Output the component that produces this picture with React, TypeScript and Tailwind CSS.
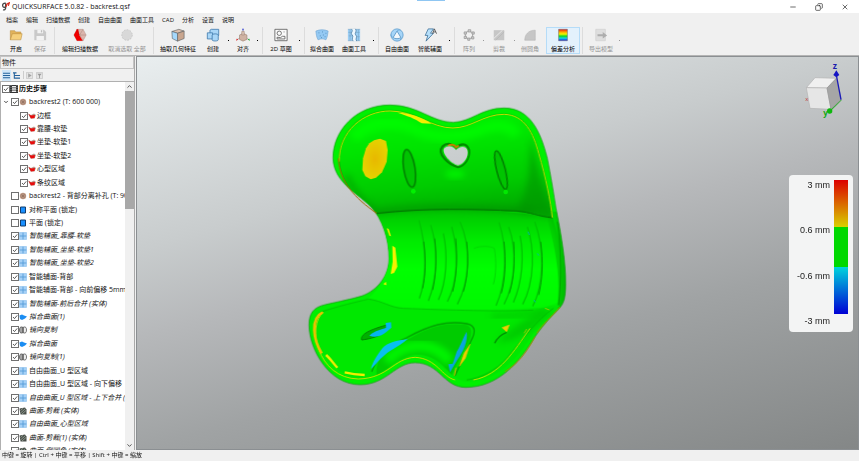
import { useState } from 'react';
import type { ReactNode } from 'react';
import { Minus, Copy, X, ChevronUp, ChevronDown } from 'lucide-react';
import clsx from 'clsx';

const MENUS = ['档案', '编辑', '扫描数据', '创建', '自由曲面', '曲面工具', 'CAD', '分析', '设置', '说明'];

type IconName =
  | 'open' | 'save' | 'scan' | 'deselect' | 'extract' | 'create' | 'align' | 'sketch' | 'fit'
  | 'tools' | 'free' | 'smart' | 'pattern' | 'trim' | 'fillet' | 'deviation' | 'export';

const TOOL_ICONS: Record<IconName, ReactNode> = {
  open: (
    <>
      <path d="M1.5 13.5V3h5l1 1.5h6V7" fill="#e0b25c" stroke="#b98a3a" strokeWidth=".6" />
      <path d="M1.5 13.5 3.8 6.5H15l-1.5 7z" fill="#f5cf7c" stroke="#b98a3a" strokeWidth=".6" />
    </>
  ),
  save: (
    <>
      <path d="M1.5 2h11L15 4.5V14H1.5z" fill="#c9c9c9" />
      <path d="M5 2h6.500v4H5zM4 9h8.500v5H4z" fill="#f3f3f3" />
      <path d="M9 2.500h1.500V5H9z" fill="#bdbdbd" />
    </>
  ),
  scan: (
    <>
      <path d="M4.500 1.500h7L15 8l-3.500 6.500h-7L1 8z" fill="#dcb5ac" stroke="#a98981" strokeWidth=".5" />
      <path d="m11.500 1.500-4 6.500 4 6.500M7.500 8H15M7.500 8l-3-6.500" fill="none" stroke="#a98981" strokeWidth=".6" />
      <path d="M4.500 1.500 6 1.500l1 6.500 4 6.500H4.500L1 8z" fill="#f00000" />
      <path d="m4.500 1.500 2.500 6.500" stroke="#b80000" strokeWidth=".5" />
    </>
  ),
  deselect: <circle cx="8" cy="8" r="6" fill="#d8d8d8" stroke="#c2c2c2" strokeDasharray="2 1.400" />,
  extract: (
    <>
      <path d="M1 4 9 1.500 15 3.500 7.500 6z" fill="#dcc0ae" stroke="#5b5f62" strokeWidth=".7" />
      <path d="M1 4l6.500 2v9L1.500 12z" fill="#a5d8fb" stroke="#5b5f62" strokeWidth=".7" />
      <path d="M7.500 6 15 3.500V12l-7.500 3z" fill="#c9a68f" stroke="#5b5f62" strokeWidth=".7" />
    </>
  ),
  create: (
    <g fill="#a9d6f7" stroke="#3c78ab" strokeWidth=".9">
      <path d="M4.500 2.500 6 1.500h8.500v7H4.500z" />
      <path d="M1.500 5.500h6v7h-6z" />
      <ellipse cx="10.500" cy="8" rx="3.500" ry="1.300" />
      <path d="M7 8v5.500c0 1.800 7 1.800 7 0V8" />
    </g>
  ),
  align: (
    <>
      <path d="M8 8V1M8 9 1 13.500M8 9l7 4.500" fill="none" stroke="#8a8a8a" strokeWidth=".7" />
      <path d="M4 8l4-2 4.500 2v5L8 15l-4-2z" fill="#cfb3a3" stroke="#96796a" strokeWidth=".6" />
      <path d="M6.500 4h3v4h-3z" fill="#d7c0b2" stroke="#96796a" strokeWidth=".5" />
      <path d="M8 0l1 2.500H7z" fill="#2233dd" />
      <path d="M0 14.500 1 12l1.500 1.500z" fill="#e01b1b" />
      <path d="M16 14.500 15 12l-1.500 1.500z" fill="#16a82c" />
    </>
  ),
  sketch: (
    <g fill="none" stroke="#555" strokeWidth=".9">
      <path d="M1 1.500h14v13H1z" fill="#fafafa" />
      <circle cx="6" cy="6" r="2.500" />
      <path d="M3.500 12.500v-2l4 .5 2-1.500h3v3z" />
      <path d="M11.500 4v1" />
    </g>
  ),
  fit: (
    <>
      <path d="M1 3.500c4.500-2 9.500-2 14 0-.5 3-.5 6-2.500 10-3-1.500-6-1.500-9 0C1.500 10 1.500 7 1 3.500z" fill="#94c9f3" stroke="#6fa5d2" strokeWidth=".7" />
      <path d="M4 5.500h1M8 4.500h1M12 6h1M5.500 9h1M9 8h1M11 10h1M7 11h1" stroke="#4c86b4" strokeWidth="1" />
    </>
  ),
  tools: (
    <>
      <path d="M1 1.500h14v13H1z" fill="#9dcff5" />
      <path d="M1 1.500h14M1 14.500h14M1.500 5h4M2 9h4M10 5h4.500M10 10h4.500M3.500 1.500v13M13 1.500v13" stroke="#6f9dc0" strokeWidth=".6" />
      <path d="M5 1c3 3-2 4.500 1 7 2 2-1.500 4 1 7h4c-2-3 1.500-5-1-7-2-2.500 2-4-.5-7z" fill="#eef8ff" />
      <path d="M5 1c3 3-2 4.500 1 7 2 2-1.500 4 1 7M9.500 1c2.500 3-1.500 4.500.5 7 2.500 2-1 4 1 7" fill="none" stroke="#3f7198" strokeWidth=".8" />
    </>
  ),
  free: (
    <>
      <circle cx="8" cy="8" r="7" fill="#a6d5f8" stroke="#5799cc" strokeWidth=".9" />
      <path d="M8 3.500 12.500 11c-2.500 1.600-6.500 1.600-9 0z" fill="#f2f8fc" stroke="#5190c0" strokeWidth=".9" />
      <path d="M8 3.500C9 2.500 11 2 12 2.500M12.500 11c.3 1-.2 2.400-1 3M3.500 11C2.500 10.500 1 9 1 7.500" fill="none" stroke="#5799cc" strokeWidth=".7" />
    </>
  ),
  smart: (
    <>
      <path d="M6 1h6L8.500 6H12L3.500 15l2-6.500H2.500z" fill="#b7e0fb" stroke="#3e7099" strokeWidth=".9" />
      <path d="m11 6.500 2-5.500 2.500 5.500M12 4.500h2.500" fill="none" stroke="#444" strokeWidth=".9" />
    </>
  ),
  pattern: (
    <g fill="#d4d4d4" stroke="#969696" strokeWidth=".9">
      <circle cx="8" cy="8" r="4.300" fill="none" />
      <path d="M7 2h3v2.500H7zM11.500 4.500H14V7h-2.500zM11 10h2.500v2.500H11zM6.500 11.500H9V14H6.500zM2.500 9.500H5V12H2.500zM2.500 4.500H5V7H2.500z" />
    </g>
  ),
  trim: (
    <>
      <path d="M2 2.500h12v11.500H2z" fill="#c6c6c6" />
      <path d="m2 12 10-9.500" stroke="#eeeeee" strokeWidth="1" />
      <path d="m4 14 10-9.500" stroke="#b0b0b0" strokeWidth=".6" />
    </>
  ),
  fillet: <path d="M2 14C2 7.500 6 2.500 14 2.500V14z" fill="#c6c6c6" stroke="#b0b0b0" strokeWidth=".6" />,
  deviation: (
    <>
      <defs>
        <linearGradient id="rainbow" x2="0" y2="1">
          <stop offset="0" stopColor="#f01414" />
          <stop offset=".25" stopColor="#ffae00" />
          <stop offset=".42" stopColor="#f5f500" />
          <stop offset=".6" stopColor="#10d820" />
          <stop offset=".78" stopColor="#14d6e8" />
          <stop offset="1" stopColor="#1020e8" />
        </linearGradient>
      </defs>
      <path d="M3 1.500h10v13H3z" fill="url(#rainbow)" stroke="#666" strokeWidth=".6" />
    </>
  ),
  export: (
    <>
      <path d="M2 1.500h11v13H2z" fill="#dedede" stroke="#cdcdcd" strokeWidth=".7" />
      <path d="M4 7h6V4.500L15 8.500 10 12V9.500H4z" fill="#adadad" />
    </>
  ),
};

interface Tool {
  label: string;
  icon: IconName;
  width: string;
  disabled?: boolean;
  active?: boolean;
  menu?: boolean;
}

const TOOL_GROUPS: Tool[][] = [
  [
    { label: '开启', icon: 'open', width: 'w-6' },
    { label: '保存', icon: 'save', width: 'w-6', disabled: true },
  ],
  [
    { label: '编辑扫描数据', icon: 'scan', width: 'w-[46px]' },
    { label: '取消选取 全部', icon: 'deselect', width: 'w-12', disabled: true },
  ],
  [
    { label: '抽取几何特征', icon: 'extract', width: 'w-11' },
    { label: '创建', icon: 'create', width: 'w-[26px]', menu: true },
    { label: '对齐', icon: 'align', width: 'w-6', menu: true },
  ],
  [{ label: '2D 草图', icon: 'sketch', width: 'w-8', menu: true }],
  [
    { label: '拟合曲面', icon: 'fit', width: 'w-[30px]' },
    { label: '曲面工具', icon: 'tools', width: 'w-[34px]', menu: true },
  ],
  [
    { label: '自由曲面', icon: 'free', width: 'w-8' },
    { label: '智能辅面', icon: 'smart', width: 'w-[34px]', menu: true },
  ],
  [
    { label: '阵列', icon: 'pattern', width: 'w-6', disabled: true, menu: true },
    { label: '剪裁', icon: 'trim', width: 'w-[26px]', disabled: true, menu: true },
    { label: '倒圆角', icon: 'fillet', width: 'w-[26px]', disabled: true },
    { label: '偏差分析', icon: 'deviation', width: 'w-[34px]', active: true },
  ],
  [{ label: '导出模型', icon: 'export', width: 'w-8', disabled: true, menu: true }],
];

type NodeIcon = 'history' | 'mesh' | 'region' | 'plane' | 'surface' | 'fitted' | 'mirror' | 'trimmed';

interface TreeNode {
  label: string;
  icon: NodeIcon;
  level?: number;
  unchecked?: boolean;
  italic?: boolean;
}

const NODES: TreeNode[] = [
  { label: '历史步骤', icon: 'history', level: 0 },
  { label: 'backrest2 (T: 600 000)', icon: 'mesh' },
  { label: '边框', icon: 'region', level: 2 },
  { label: '靠腰-软垫', icon: 'region', level: 2 },
  { label: '坐垫-软垫1', icon: 'region', level: 2 },
  { label: '坐垫-软垫2', icon: 'region', level: 2 },
  { label: '心型区域', icon: 'region', level: 2 },
  { label: '条纹区域', icon: 'region', level: 2 },
  { label: 'backrest2 - 背部分离补孔 (T: 90', icon: 'mesh', unchecked: true },
  { label: '对称平面 (锁定)', icon: 'plane', unchecked: true },
  { label: '平面 (锁定)', icon: 'plane', unchecked: true },
  { label: '智能辅面_靠腰-软垫', icon: 'surface', italic: true },
  { label: '智能辅面_坐垫-软垫1', icon: 'surface', italic: true },
  { label: '智能辅面_坐垫-软垫2', icon: 'surface', italic: true },
  { label: '智能辅面-背部', icon: 'surface' },
  { label: '智能辅面-背部 - 向前偏移 5mm', icon: 'surface' },
  { label: '智能辅面-前后合并 (实体)', icon: 'surface', italic: true },
  { label: '拟合曲面(1)', icon: 'fitted', italic: true },
  { label: '镜向复制', icon: 'mirror', italic: true },
  { label: '拟合曲面', icon: 'fitted', italic: true },
  { label: '镜向复制(1)', icon: 'mirror', italic: true },
  { label: '自由曲面_U 型区域', icon: 'surface' },
  { label: '自由曲面_U 型区域 - 向下偏移', icon: 'surface' },
  { label: '自由曲面_U 型区域 - 上下合并 (', icon: 'surface', italic: true },
  { label: '曲面-剪裁 (实体)', icon: 'trimmed', italic: true },
  { label: '自由曲面_心型区域', icon: 'surface', italic: true },
  { label: '曲面-剪裁(1) (实体)', icon: 'trimmed', italic: true },
  { label: '曲面-倒圆角 (实体)', icon: 'trimmed', italic: true },
];

const NODE_ICONS: Record<NodeIcon, ReactNode> = {
  history: (
    <>
      <path d="M0 0h8v8H0z" fill="#333" />
      <path d="M2 1h4v1.500H2zM2 3.300h4v1.500H2zM2 5.600h4V7H2z" fill="#eee" />
      <path d="M1 0v8M7 0v8" stroke="#aaa" strokeWidth=".7" strokeDasharray="1 1" />
    </>
  ),
  mesh: (
    <>
      <circle cx="4" cy="4" r="3.200" fill="#c19c88" />
      <path d="M1 4h6M4 1v6M2 2l4 4M6 2 2 6" stroke="#7d5f50" strokeWidth=".4" />
    </>
  ),
  region: (
    <>
      <path d="M0 1.500 3 3l3-1.500L8 3 6.500 6.500h-4z" fill="#b89a8e" />
      <path d="M.500 2 3 3.500 7 3 6.500 6 3 6.500z" fill="#e80c0c" />
    </>
  ),
  plane: <path d="M1.500 1h5v6h-5z" fill="#1a90ff" stroke="#123c6b" strokeWidth="1" />,
  surface: (
    <>
      <path d="M.500.500h7v7h-7z" fill="#a4d0f6" />
      <path d="M4 .5v7M.500 4h7" stroke="#4f97d6" strokeWidth=".8" />
      <path d="M.500.500h7v7h-7z" fill="none" stroke="#7fb8ea" strokeWidth=".5" />
    </>
  ),
  fitted: <path d="M.500 2.500 3 1.500l2 1L8 3.500 6 5.500 3 7 1 6z" fill="#1b8df2" />,
  mirror: (
    <>
      <path d="M3.500 1C1 .5.500 2 .500 4s.5 3.500 3 3z" fill="#a5a5a5" stroke="#444" strokeWidth=".7" />
      <path d="M4.500 1C7 .5 7.500 2 7.500 4s-.5 3.500-3 3z" fill="#eee" stroke="#444" strokeWidth=".7" />
    </>
  ),
  trimmed: (
    <>
      <path d="M.500 1.500 6 .5l1.500 2v5h-6z" fill="#4a4f4a" />
      <path d="m1.500 6 5-4.500M3 7l4-3.500M1.500 3.500 4 1.300" stroke="#a9b8a9" strokeWidth=".7" />
    </>
  ),
};

function TitleBar() {
  return (
    <header className="flex h-[13px] items-center bg-white pl-0.5">
      <svg viewBox="0 0 24 26" className="h-[9px] w-2">
        <path d="M11 3C5 2 1 6 2 11s6 6 9 2M11 3v14c0 5-4 7-8 6" fill="none" stroke="#4a4a4a" strokeWidth="4" />
        <path d="M12 14C13 7 16 3 22 2M13 7l9-5-3 9" fill="none" stroke="#d8281c" strokeWidth="3.500" />
      </svg>
      <h1 className="ml-0.5 flex-1 text-[7px] leading-none whitespace-nowrap">QUICKSURFACE 5.0.82 - backrest.qsf</h1>
      <div className="h-full w-7 border-t border-[#8fc6f2]" />
      <div className="flex flex-1 items-center justify-end gap-[18px] pr-[10px] text-[#222]">
        <button aria-label="Minimize"><Minus size={8} /></button>
        <button aria-label="Restore"><Copy size={8} className="-scale-x-100" /></button>
        <button aria-label="Close"><X size={8} /></button>
      </div>
    </header>
  );
}

function Toolbar() {
  return (
    <div className="flex h-[29px] items-stretch border-b border-[#b4b4b4] pb-px pl-1">
      {TOOL_GROUPS.map((group, i) => (
        <div key={i} className="flex items-stretch">
          {i > 0 && <div className="mx-0.5 w-px bg-[#dcdcdc]" />}
          {group.map((tool) => (
            <div key={tool.label} className="flex items-center">
              <button
                disabled={tool.disabled}
                className={clsx(
                  'flex h-full flex-col items-center justify-center gap-[3px] border',
                  tool.width,
                  tool.active ? 'ml-[3px] border-[#b5dcf8] bg-[#e3f1fc]' : 'border-transparent',
                  tool.disabled ? 'text-[#949494]' : 'text-black',
                )}
              >
                <svg viewBox="0 0 16 16" className="size-[14px]">{TOOL_ICONS[tool.icon]}</svg>
                <span className="text-[6px] leading-[8px] whitespace-nowrap">{tool.label}</span>
              </button>
              {tool.menu && (
                <span className={clsx('mx-0.5 size-px', tool.disabled ? 'bg-[#999]' : 'bg-black')} />
              )}
            </div>
          ))}
        </div>
      ))}
    </div>
  );
}

function TreeRow({ node }: { node: TreeNode }) {
  const [checked, setChecked] = useState(!node.unchecked);
  const level = node.level ?? 1;
  return (
    <li className={clsx('flex min-h-0 items-center', level === 0 ? 'pl-px' : level === 1 ? 'pl-0.5' : 'pl-[19px]')}>
      {level === 1 && (
        <span className="w-2 shrink-0">
          {node.label.includes('600') && <ChevronDown size={6} strokeWidth={3} />}
        </span>
      )}
      <label className="flex items-center whitespace-nowrap">
        <span className="grid shrink-0 place-items-center">
          <input
            type="checkbox"
            checked={checked}
            onChange={(e) => setChecked(e.target.checked)}
            className="peer col-start-1 row-start-1 size-2 appearance-none border border-[#707070] bg-white"
          />
          <svg viewBox="0 0 8 8" className="pointer-events-none invisible col-start-1 row-start-1 size-2 peer-checked:visible">
            <path d="m2 4 1.500 1.600L6.200 2.400" fill="none" stroke="#333" strokeWidth=".8" />
          </svg>
        </span>
        <svg viewBox="0 0 8 8" className="size-2 shrink-0">{NODE_ICONS[node.icon]}</svg>
        <span
          className={clsx(
            'text-[7px] leading-[10px]',
            level === 1 ? 'ml-0.5' : 'ml-px',
            level === 0 && 'font-bold',
            node.italic && 'italic',
          )}
        >
          {node.label}
        </span>
      </label>
    </li>
  );
}

function ObjectPanel() {
  return (
    <aside className="flex w-[135px] shrink-0 flex-col border-r border-[#a9a9a9]">
      <h2 className="h-[13px] border border-[#c4c4c4] pl-px text-[7px] leading-[11px]">物件</h2>
      <div className="flex h-3 items-center gap-px pl-0.5">
        <button aria-label="List view" className="flex h-[11px] w-[9px] items-center justify-center bg-[#cfe6f8]">
          <svg viewBox="0 0 8 8" className="size-[7px]"><path d="M0 1.500h8M0 4h8M0 6.500h8" stroke="#23619b" strokeWidth="1.200" /></svg>
        </button>
        <button aria-label="Tree view" className="flex w-[9px] justify-center">
          <svg viewBox="0 0 8 8" className="size-[7px]"><path d="M0 1h4M3 4h5M3 7h5M1.500 1v6H3M1.500 4H3" fill="none" stroke="#23619b" strokeWidth="1.200" /></svg>
        </button>
        <span className="ml-px h-2 w-px bg-[#ccc]" />
        <button aria-label="Play" disabled className="flex w-[9px] justify-center">
          <svg viewBox="0 0 8 8" className="size-[7px]"><path d="M.5.5h7v7h-7z" fill="#e4e4e4" stroke="#bbb" strokeWidth=".7" /><path d="m2.500 1.500 4 2.500-4 2.500z" fill="#a4a4a4" /></svg>
        </button>
        <button aria-label="Filter" disabled className="flex w-[9px] justify-center">
          <svg viewBox="0 0 8 8" className="size-[7px]"><path d="M.5.5h7v7h-7z" fill="#e4e4e4" stroke="#bbb" strokeWidth=".7" /><path d="M1.500 2h5L4.500 4.300V7h-1V4.300z" fill="#999" /></svg>
        </button>
      </div>
      <div className="flex flex-1 border-t border-l border-[#b0b0b0] bg-white">
        <div className="h-[368px] min-w-0 flex-1 overflow-hidden">
          <ul className="grid h-[376px] auto-rows-fr">
            {NODES.map((node) => <TreeRow key={node.label} node={node} />)}
          </ul>
        </div>
        <div className="flex w-[9px] flex-col items-center bg-[#f0f0f0] text-[#444]">
          <ChevronUp size={7} strokeWidth={3} className="my-px" />
          <div className="h-[118px] w-full bg-[#a8a8a8]" />
          <ChevronDown size={7} strokeWidth={3} className="mt-auto mb-px" />
        </div>
      </div>
    </aside>
  );
}

const BODY =
  'M99 190C98 110 165 30 270 30C355 30 395 82 460 82C515 80 545 39 612 39C690 39 722 110 742 190C752 240 762 300 768 340C782 410 798 500 797 570C796 610 792 624 778 640C745 672 722 700 705 725C660 800 595 877 497 877C430 877 420 803 345 803C285 803 260 869 180 869C85 869 27 760 27 690C27 655 40 637 75 629C115 620 155 612 185 603C235 585 267 540 267 490C267 430 245 370 215 338C180 298 101 265 99 190Z';

const HEART = 'M432 160C445 148 460 154 468 165C478 154 496 150 502 165C508 185 490 210 474 211C452 205 425 175 432 160Z';

function BackrestModel() {
  return (
    <svg viewBox="0 0 840 900" className="mt-[38px] ml-[163px] h-[300px] w-[280px] shrink-0">
      <defs>
        <linearGradient id="upper" x1=".3" y1="0" x2=".5" y2="1">
          <stop offset="0" stopColor="#00f400" />
          <stop offset=".35" stopColor="#00e400" />
          <stop offset=".7" stopColor="#00cc00" />
          <stop offset="1" stopColor="#00a800" />
        </linearGradient>
        <linearGradient id="middle" x1="0" y1="0" x2="0" y2="1">
          <stop offset="0" stopColor="#00c400" />
          <stop offset=".3" stopColor="#00ea00" />
          <stop offset=".6" stopColor="#00ff00" />
          <stop offset="1" stopColor="#00f800" />
        </linearGradient>
        <linearGradient id="edge" x1="0" y1="0" x2="1" y2="0">
          <stop offset="0" stopColor="#009000" stopOpacity="0" />
          <stop offset="1" stopColor="#009000" stopOpacity=".6" />
        </linearGradient>
        <radialGradient id="spot">
          <stop offset="0" stopColor="#e8b800" />
          <stop offset="1" stopColor="#e6d200" />
        </radialGradient>
        <filter id="soft" x="-30%" y="-30%" width="160%" height="160%">
          <feGaussianBlur stdDeviation="9" />
        </filter>
        <filter id="crease" x="-30%" y="-30%" width="160%" height="160%">
          <feGaussianBlur stdDeviation="2" />
        </filter>
        <clipPath id="body"><path d={BODY} /></clipPath>
        <mask id="heart">
          <path d="M0 0h840v900H0z" fill="#fff" />
          <path d={HEART} fill="#000" />
        </mask>
      </defs>
      <g mask="url(#heart)">
        <path d={BODY} fill="#00f000" stroke="#0c960c" strokeWidth="2" />
        <g clipPath="url(#body)">
          {/* lumbar section with its ribs */}
          <path d="M220 352C360 334 600 340 758 368L780 450L780 620L720 642C600 650 420 645 290 636L205 610C290 540 275 420 220 352Z" fill="url(#middle)" />
          <path d="M735 350H800V640H770C785 550 765 450 735 350Z" fill="url(#edge)" />
          <path d="M772 380C784 460 784 560 776 630" fill="none" stroke="#00a400" strokeWidth="3" />
          <g fill="none" stroke="#00c400" strokeWidth="4" filter="url(#crease)">
            <path d="M357 376C380 460 380 550 358 610M392 390C415 460 412 550 385 618M430 415C444 480 440 560 415 615M455 395C476 470 474 560 442 620M480 380C515 460 508 560 472 628" />
            <path d="M597 382C622 460 620 560 588 632M626 396C650 460 648 560 612 628M660 422C672 480 668 560 640 622M682 396C704 460 704 560 668 628M704 380C734 460 732 570 698 634" />
          </g>
          <g fill="none" stroke="#009c00" strokeWidth="3" filter="url(#crease)">
            <path d="M371 440C379 500 376 540 368 580M404 430C411 490 408 540 398 585M467 430C473 490 470 540 458 590M500 440C507 500 502 550 490 590M612 440C618 500 616 550 604 595M641 440C645 500 642 550 628 595M722 440C730 500 728 550 716 600" />
          </g>
          <path d="M522 460C540 452 570 452 583 460C590 500 588 540 580 568" fill="none" stroke="#00d800" strokeWidth="3" />

          {/* upper cushion */}
          <path d="M118 190C118 110 185 47 270 47C350 47 395 98 458 98C515 98 548 57 612 57C680 60 702 120 718 180C738 250 750 310 757 368C720 362 690 350 650 349C520 343 380 338 230 356C175 320 118 265 118 190Z" fill="url(#upper)" stroke="#00b800" strokeWidth="3" />
          <path d="M690 120C705 200 742 320 754 364L650 344C690 290 690 200 690 120Z" fill="#009400" opacity=".6" filter="url(#soft)" />
          <path d="M140 240C160 290 200 330 232 350C380 330 520 335 700 350" fill="none" stroke="#008800" strokeWidth="14" opacity=".5" filter="url(#soft)" />
          <path d="M160 130C210 75 290 75 350 105C400 130 480 130 540 105C590 85 630 90 650 120" fill="none" stroke="#00ff00" strokeWidth="34" opacity=".7" filter="url(#soft)" />
          <path d="M230 355C380 338 520 342 650 348C690 351 715 364 757 368" fill="none" stroke="#006c00" strokeWidth="3" />
          <ellipse cx="465" cy="237" rx="30" ry="12" fill="#00f400" filter="url(#soft)" />

          {/* lower cushion */}
          <path d="M65 648C120 630 165 620 205 612C250 618 270 638 310 640C450 645 600 650 700 645C740 640 755 625 780 632L700 715C650 795 590 858 500 860C450 855 425 790 345 787C280 790 260 853 180 850C90 840 40 750 42 690C44 670 50 655 65 648Z" fill="#00e800" />
          <path d="M65 650C120 632 165 622 205 612C250 618 270 638 310 640C450 645 600 650 700 645" fill="none" stroke="#00c800" strokeWidth="3" />
          <path d="M230 840C225 790 260 755 320 735C380 700 430 680 500 690C525 700 510 740 495 760L455 840C420 800 390 775 340 780C295 790 265 825 230 840Z" fill="#00cb00" />
          <path d="M260 800C310 740 400 735 450 800" fill="none" stroke="#00ff00" strokeWidth="34" opacity=".8" filter="url(#soft)" />
          <path d="M215 830C235 775 280 745 320 728C390 690 440 676 500 686C530 692 525 715 514 735L465 842" fill="none" stroke="#00a000" strokeWidth="4" filter="url(#crease)" />
          <path d="M735 645C680 670 630 700 590 745C680 730 700 700 760 645Z" fill="#00b000" opacity=".5" filter="url(#soft)" />
          <path d="M575 665C610 665 680 660 735 645" fill="none" stroke="#00b800" strokeWidth="14" opacity=".6" filter="url(#soft)" />
          <path d="M760 640C710 675 670 730 620 790C590 825 540 850 500 855" fill="none" stroke="#00bc00" strokeWidth="3" />
        </g>

        {/* slots */}
        <g strokeWidth="5" filter="url(#crease)">
          <ellipse cx="328" cy="220" rx="17" ry="57" transform="rotate(-9 328 220)" fill="#00c400" stroke="#008400" />
          <ellipse cx="603" cy="225" rx="13" ry="59" transform="rotate(-14 603 225)" fill="#00c400" stroke="#008400" />
          <circle cx="340" cy="289" r="7" fill="#00f000" />
          <circle cx="617" cy="291" r="7" fill="#00e800" />
        </g>
        <path d="M427 155C442 140 460 148 468 160C480 145 500 142 507 165C510 190 492 214 474 216C445 210 410 175 427 155Z" fill="none" stroke="#008c00" strokeWidth="7" filter="url(#crease)" />
        <path d={HEART} fill="none" stroke="#0ad50a" strokeWidth="5" />
        <path d="M444 153C452 147 464 148 468 157L476 152" fill="none" stroke="#c08000" strokeWidth="6" />

        {/* out of tolerance, positive side */}
        <path d="M222 136L240 131L258 138L263 165L260 200L246 232L228 248L212 253L196 244L187 225L189 190L198 160L208 145Z" fill="url(#spot)" />
        <g fill="none" stroke="#c4de00" strokeWidth="3">
          <path d="M118 200C115 110 190 48 270 48C345 48 395 99 458 99C515 99 550 58 612 58C675 60 700 115 716 175C738 250 752 320 757 368" />
          <path d="M70 652C20 690 50 850 175 852C265 850 280 790 345 787C410 790 425 845 465 855" />
          <path d="M520 855C600 840 640 770 690 700" />
        </g>
        <path d="M115 190C118 260 165 310 230 355" fill="none" stroke="#a06a00" strokeWidth="3" />
        <path d="M705 725C665 800 635 815 615 830M780 636C750 670 730 685 710 715" fill="none" stroke="#a89000" strokeWidth="3" />
        <path d="M292 53C325 52 370 68 394 86L365 85C345 70 320 62 292 53Z" fill="#f5ee00" />
        <path d="M260 400L266 402L273 424L268 422ZM277 452L286 458L292 515L282 534L272 537L278 500ZM250 568L258 560L259 571Z" fill="#f6f000" />
        <path d="M68 652C30 670 40 735 65 775" fill="none" stroke="#ecc000" strokeWidth="8" />
        <path d="M78 780C90 790 100 805 112 818M134 832C155 837 175 839 194 840" fill="none" stroke="#f3ec00" strokeWidth="7" />
        <path d="M510 748L496 790L478 814L492 775ZM606 698L628 690L620 710ZM680 702L672 715M735 640L748 645" fill="#eed000" stroke="#e0c000" strokeWidth="2" />
        <path d="M463 842L468 818" stroke="#e6a800" strokeWidth="3" />

        {/* out of tolerance, negative side */}
        <path d="M185 735C178 715 225 700 260 690C265 715 225 730 185 735Z" fill="#00b000" stroke="#008400" strokeWidth="3" filter="url(#crease)" />
        <path d="M208 722C225 705 245 704 258 698L257 684L273 682L274 698L258 712C245 724 225 729 208 722Z" fill="#06b4f0" />
        <path d="M323 732C290 737 262 742 247 760C232 780 215 806 213 822C235 800 245 785 270 768C290 755 310 745 323 732Z" fill="#08c0ee" />
        <path d="M500 710C504 740 490 768 473 793L450 832L445 808L458 806L470 770C480 755 488 730 500 710Z" fill="#0aa4dc" />
        <path d="M584 745C590 730 605 718 620 712" fill="none" stroke="#009000" strokeWidth="4" filter="url(#crease)" />
        <path d="M684 410L688 420M712 475L716 482M702 615L706 622" stroke="#00b8a8" strokeWidth="3" />
      </g>
    </svg>
  );
}

function ViewCube() {
  return (
    <svg viewBox="69 168 129 186" className="mr-[6px] h-[62px] w-[43px]">
      <text x="73" y="301" fontSize="18" fill="#c03030">x</text>
      <path d="M180 296 146 330" stroke="#10b010" strokeWidth="5" />
      <path d="M76 260 102 230 166 232 138 261z" fill="#f0f0f0" stroke="#b4b4b4" strokeWidth="2" />
      <path d="M76 260 138 261 150 325 87 322z" fill="#e6e6e6" stroke="#b4b4b4" strokeWidth="2" />
      <path d="M138 261 166 232 180 296 150 325z" fill="#a6a6a6" stroke="#999" strokeWidth="2" />
      <path d="M166 222 180 296" stroke="#1a1ab8" strokeWidth="4" />
      <path d="m166 208 9 14-9 7-9-7z" fill="#1414c4" />
      <circle cx="146" cy="330" r="8" fill="#0db80d" />
      <text x="155" y="203" fontSize="26" fontWeight="bold" fill="#1c1cae">z</text>
      <text x="127" y="345" fontSize="24" fontWeight="bold" fill="#12a812">y</text>
    </svg>
  );
}

function DeviationLegend() {
  return (
    <div className="mt-14 flex h-[157px] w-16 justify-end gap-1 rounded-sm bg-[#f3f4f4] pt-[5px] pr-[5px] text-[#222]">
      <div className="flex h-[147px] flex-col items-end justify-between font-['Liberation_Sans',sans-serif] text-[9px] leading-[11px] whitespace-nowrap">
        <span>3 mm</span>
        <span>0.6 mm</span>
        <span>-0.6 mm</span>
        <span>-3 mm</span>
      </div>
      <div className="h-[134px] w-[14px] bg-[linear-gradient(#dc0000,#d8d000_35%,#00d800_35%,#00d800_65%,#00d4dc_65%,#0000d4)]" />
    </div>
  );
}

export default function App() {
  return (
    <div className="flex min-h-screen flex-col bg-[#f0f0f0] font-['Open_Sans','Noto_Sans_CJK_SC',sans-serif] text-[#111]">
      <TitleBar />
      <nav className="flex h-[14px] items-center gap-2 pl-1.5 text-[6px] leading-none">
        {MENUS.map((menu) => <button key={menu}>{menu}</button>)}
      </nav>
      <Toolbar />
      <div className="flex flex-1 gap-px">
        <ObjectPanel />
        <main className="flex min-w-0 flex-1 justify-between border border-[#8b8f92] bg-[linear-gradient(165deg,#e9eeef,#c8cccd_33%,#b6b8ba_48%,#a0a3a4_67%,#848787)]">
          <BackrestModel />
          <div className="flex flex-col items-end pr-[5px]">
            <ViewCube />
            <DeviationLegend />
          </div>
        </main>
      </div>
      <footer className="h-[11px] pl-0.5 text-[6px] leading-[11px]">中键 = 旋转 | Ctrl + 中键 = 平移 | Shift + 中键 = 缩放</footer>
    </div>
  );
}
